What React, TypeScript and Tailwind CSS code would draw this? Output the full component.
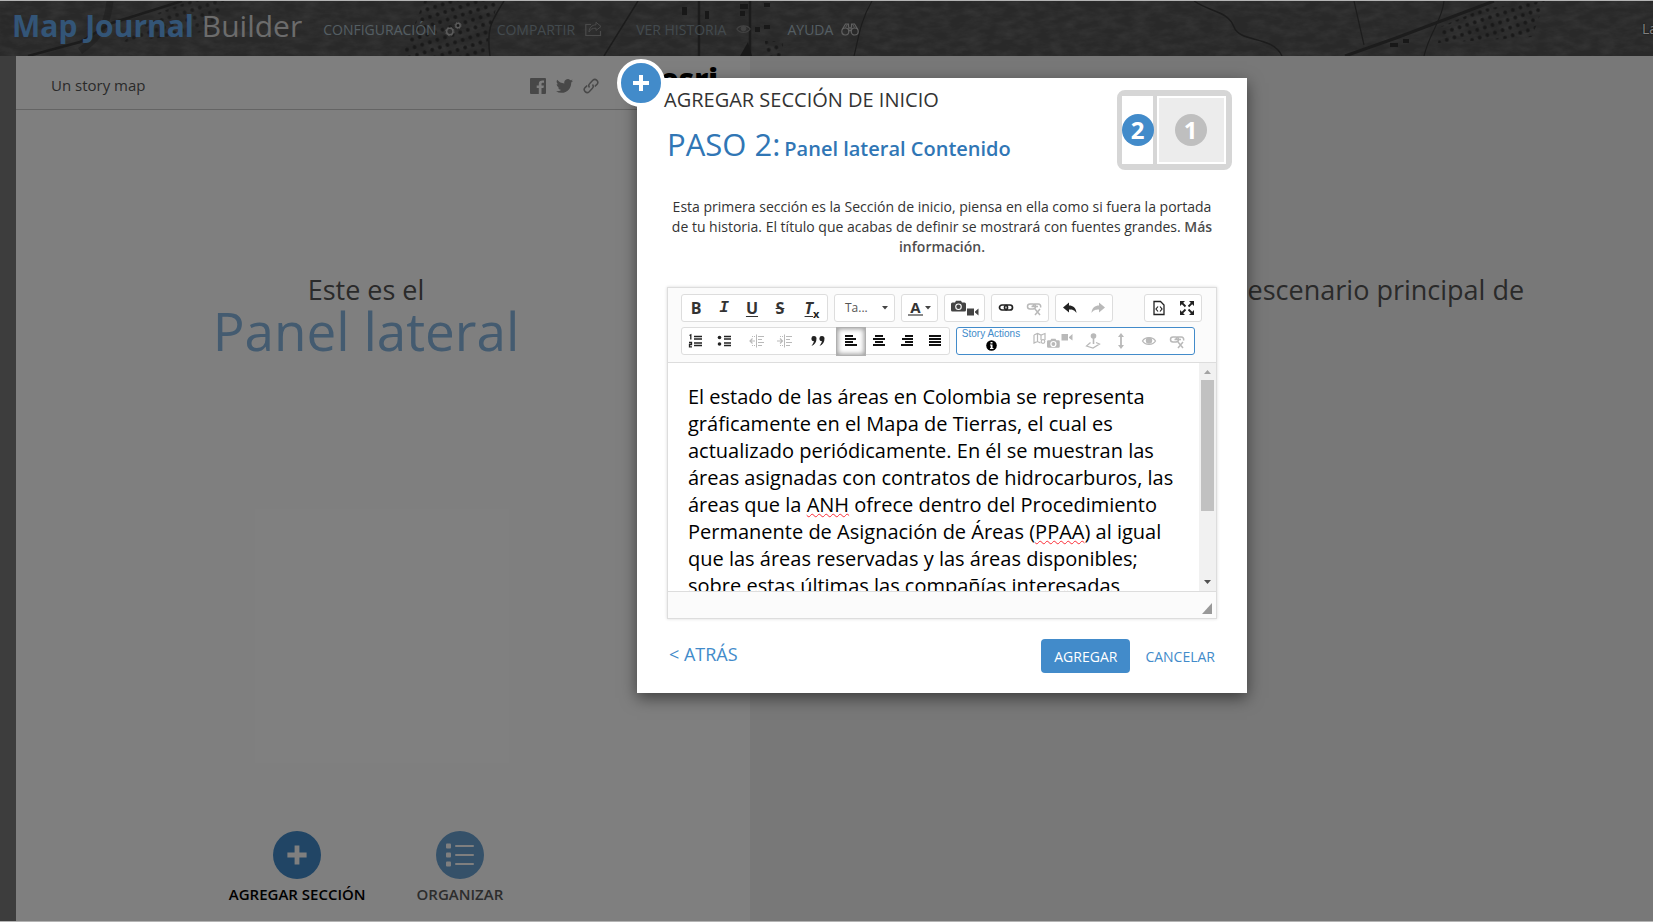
import React from "react";

type IconProps = { className?: string };

function HeaderTexture() {
  return (
    <svg
      aria-hidden="true"
      className="absolute inset-0 h-full w-full"
      viewBox="0 0 1884 55"
      preserveAspectRatio="xMinYMin slice"
    >
      <defs>
        <pattern id="dots" width="8" height="8" patternUnits="userSpaceOnUse" patternTransform="rotate(-18)">
          <circle cx="4" cy="4" r="1.900" fill="#323232" />
        </pattern>
        <filter id="grain" x="0" y="0" width="100%" height="100%">
          <feTurbulence type="fractalNoise" baseFrequency="0.06 0.14" numOctaves="4" seed="4" />
          <feColorMatrix values="0 0 0 0 0.22  0 0 0 0 0.22  0 0 0 0 0.22  0.9 0 0 0 -0.3" />
        </filter>
      </defs>
      <rect width="1884" height="55" fill="#525252" />
      <rect width="1884" height="55" filter="url(#grain)" />
      <g fill="none" stroke="#383838">
        <path d="M28 55 L80 41 L112 22 L182 0" strokeWidth="2.500" />
        <path d="M110 0 C108 18 104 34 80 50" strokeWidth="7" opacity=".5" />
        <path d="M504 0 C492 20 486 26 490 55M638 0 L604 55" strokeWidth="1.500" />
        <path d="M699 0 V55M750 0 V55" strokeWidth="2.500" />
        <path d="M872 0 C860 20 858 40 854 55" strokeWidth="1.200" />
        <path d="M1194 0 C1212 12 1228 10 1234 26 S1272 34 1282 55" strokeWidth="1.500" />
        <path d="M1345 55 L1396 37 L1494 0" strokeWidth="3" />
        <path d="M1444 0 C1442 20 1430 30 1424 55M1354 0 L1364 44" strokeWidth="1.200" />
      </g>
      <g fill="url(#dots)">
        <path d="M424 0 H498 L484 55 H402 Z" />
        <path d="M158 12 L190 0 H225 L210 30 L122 42 Z" opacity=".8" />
        <path d="M1440 26 L1482 8 L1545 0 L1532 36 L1438 42 Z" />
        <path d="M765 40 h18 v15 h-18 Z" />
      </g>
      <path
        d="M682 6h5v8h-5zM705 10h4v8h-4zM740 3h8v5h-8zM740 10h5v5h-5zM764 2h6v4h-6zM755 26h5v5h-5zM764 24h6v4h-6zM740 55l8-14 4 14zM1390 42h8v4h-8zM1403 38h6v4h-6z"
        fill="#303030"
      />
    </svg>
  );
}

function GearsIcon({ className }: IconProps) {
  return (
    <svg className={className} width="17" height="16" viewBox="0 0 17 16" fill="none" stroke="currentColor">
      <circle cx="4.800" cy="10.500" r="3.200" strokeWidth="1.500" />
      <circle cx="4.800" cy="10.500" r="4.300" strokeWidth=".8" strokeDasharray="1.6 1.8" />
      <circle cx="13" cy="4.500" r="2.200" strokeWidth="1.400" />
      <circle cx="13" cy="4.500" r="3.200" strokeWidth=".8" strokeDasharray="1.2 1.3" />
    </svg>
  );
}

function ShareIcon({ className }: IconProps) {
  return (
    <svg className={className} width="17" height="16" viewBox="0 0 17 16" fill="none" stroke="currentColor">
      <path d="M6 3.500H.8V14.500H15.500V10" strokeWidth="1.200" />
      <path d="M11 1.200 16 5.500 11 9.500V7.200C7.500 7 5.500 8.200 4 11 4.200 6.500 7 4 11 3.800Z" />
    </svg>
  );
}

function EyeIcon({ className }: IconProps) {
  return (
    <svg className={className} width="15" height="12" viewBox="0 0 15 12" fill="none" stroke="currentColor">
      <path d="M.8 6C3.500 1.800 11.500 1.800 14.200 6 11.500 10.500 3.500 10.500.8 6Z" strokeWidth="1.100" />
      <circle cx="7.500" cy="5.500" r="2.400" fill="currentColor" />
    </svg>
  );
}

function BinocularsIcon({ className }: IconProps) {
  return (
    <svg className={className} width="18" height="14" viewBox="0 0 18 14" fill="none" stroke="currentColor" strokeWidth="1.200">
      <circle cx="4.300" cy="9.500" r="3.500" />
      <circle cx="13.700" cy="9.500" r="3.500" />
      <path d="M1.200 7.500 4.500 2H7.500V5M16.800 7.500 13.500 2H10.500V5M7.800 5V9.500M10.200 5V9.500M7.500 6H10.500M7.500 8.500H10.500" />
      <path d="M4.500 5.500 6.500 2M13.500 5.500 11.500 2" strokeWidth=".9" />
    </svg>
  );
}

function FacebookIcon() {
  return (
    <svg width="16" height="16" viewBox="0 0 16 16" fill="currentColor">
      <path d="M1 0H15A1 1 0 0 1 16 1V15A1 1 0 0 1 15 16H11.500V10H13.500L13.900 7.500H11.500V6C11.500 5.200 11.900 4.800 12.700 4.800H14V2.500C11 2 8.800 3 8.800 5.700V7.500H6.700V10H8.800V16H1A1 1 0 0 1 0 15V1A1 1 0 0 1 1 0Z" />
    </svg>
  );
}

function TwitterIcon() {
  return (
    <svg width="17" height="16" viewBox="0 2 24 20" fill="currentColor">
      <path d="M24 4.600a10 10 0 0 1-2.800.8 5 5 0 0 0 2.100-2.700 10 10 0 0 1-3.100 1.200 4.900 4.900 0 0 0-8.400 4.500A14 14 0 0 1 1.700 3.200a4.900 4.900 0 0 0 1.500 6.500 4.900 4.900 0 0 1-2.200-.6v.1a4.900 4.900 0 0 0 3.900 4.800 5 5 0 0 1-2.200.1 4.900 4.900 0 0 0 4.600 3.400A9.900 9.900 0 0 1 0 19.500a14 14 0 0 0 7.500 2.200c9.100 0 14-7.500 14-14v-.6A10 10 0 0 0 24 4.600Z" />
    </svg>
  );
}

function ChainIcon() {
  return (
    <svg width="16" height="16" viewBox="0 0 16 16" fill="none" stroke="currentColor" strokeWidth="1.500">
      <path d="M6.500 9.500A3 3 0 0 1 6.800 5.500L9.800 2.300A2.900 2.900 0 0 1 13.900 6.400L11.800 8.500" />
      <path d="M9.500 6.500A3 3 0 0 1 9.200 10.500L6.200 13.700A2.900 2.900 0 0 1 2.100 9.600L4.200 7.500" />
    </svg>
  );
}

function PlusIcon({ size }: { size: number }) {
  return (
    <svg aria-hidden="true" width={size} height={size} viewBox="0 0 20 20" fill="currentColor">
      <path d="M8 2h4v6h6v4h-6v6h-4v-6h-6v-4h6z" />
    </svg>
  );
}

function ListIcon() {
  return (
    <svg aria-hidden="true" width="28" height="24" viewBox="0 0 28 24" fill="currentColor">
      <rect x="0" y="0.500" width="5" height="5" rx="1" />
      <rect x="0" y="9.500" width="5" height="5" rx="1" />
      <rect x="0" y="18.500" width="5" height="5" rx="1" />
      <rect x="9" y="2" width="19" height="2" rx="1" />
      <rect x="9" y="11" width="19" height="2" rx="1" />
      <rect x="9" y="20" width="19" height="2" rx="1" />
    </svg>
  );
}

function Svg16({ children, w = 16 }: { children: React.ReactNode; w?: number }) {
  return (
    <svg aria-hidden="true" width={w} height="16" viewBox={`0 0 ${w} 16`} fill="none" stroke="currentColor" strokeWidth="1.500">
      {children}
    </svg>
  );
}

const linkShape = (
  <g strokeWidth="1.700">
    <rect x="1.500" y="5" width="8" height="5" rx="2.500" />
    <rect x="6.500" y="5" width="8" height="5" rx="2.500" />
  </g>
);

const unlinkShape = (
  <>
    <g strokeWidth="1.500">
      <rect x="1.500" y="4" width="8" height="5" rx="2.500" />
      <path d="M5.500 6.500H12M7 6.500a2.500 2.500 0 0 1 2.500-2.500H12A2.500 2.500 0 0 1 14.500 7.500" />
    </g>
    <path d="M9 9 14 15M14 9 9 15" strokeWidth="1.500" />
  </>
);

const cameraPath =
  "M1.500 2.500H4L5 .8H10L11 2.500H13.500A1.500 1.500 0 0 1 15 4V10A1.500 1.500 0 0 1 13.500 11.500H1.500A1.500 1.500 0 0 1 0 10V4A1.500 1.500 0 0 1 1.500 2.500Z";

function Tool({
  label,
  className = "w-7",
  disabled,
  active,
  children,
}: {
  label: string;
  className?: string;
  disabled?: boolean;
  active?: boolean;
  children: React.ReactNode;
}) {
  return (
    <button
      type="button"
      aria-label={label}
      title={label}
      disabled={disabled}
      className={`flex h-[27px] items-center justify-center ${className} ${disabled ? "text-[#b9b9b9]" : "text-[#222222]"} ${
        active ? "bg-white shadow-[inset_0_0_5px_1px_rgba(0,0,0,0.4)] outline-1 outline-[#b0b0b0]" : ""
      }`}
    >
      {children}
    </button>
  );
}

function Group({ children, className = "" }: { children: React.ReactNode; className?: string }) {
  return (
    <div className={`flex h-7 items-center rounded-[3px] border border-[#dddddd] bg-white ${className}`}>{children}</div>
  );
}

function Caret() {
  return (
    <svg aria-hidden="true" width="6" height="4" viewBox="0 0 6 4" fill="#444444">
      <path d="M0 0H6L3 3.500Z" />
    </svg>
  );
}

function AlignLines({ rows }: { rows: [number, number][] }) {
  return (
    <Svg16>
      {rows.map(([x, w], i) => (
        <rect key={i} x={x} y={2 + i * 3} width={w} height="2" fill="#111111" stroke="none" />
      ))}
    </Svg16>
  );
}

function IndentIcon({ flip }: { flip?: boolean }) {
  return (
    <Svg16>
      <path d="M7.500 1.500V14.500" strokeWidth="1" />
      <path d="M9 3.500H15M9 6.500H13M9 9.500H15M9 12.500H13" strokeWidth="1" />
      <path d="M3 3.500H6M3 12.500H6" strokeWidth="1" strokeDasharray="1 1" />
      {flip ? <path d="M0 8H5M3 5.500 5.500 8 3 10.500" strokeWidth="1.200" /> : <path d="M1 8H6M3.500 5.500 1 8 3.500 10.500" strokeWidth="1.200" />}
    </Svg16>
  );
}

const letter = "text-base leading-none font-bold text-[#333333]";

function EditorToolbar() {
  return (
    <div role="toolbar" aria-label="Formato" className="flex flex-col gap-[5px] border-b border-[#dddddd] bg-[#fbfbfb] pt-[6px] pr-[14px] pb-[7px] pl-[13px]">
      <div className="flex gap-[6px]">
        <Group className="w-[147px]">
          <Tool label="Negrita"><span className={letter}>B</span></Tool>
          <Tool label="Cursiva"><span className={`${letter} font-['Liberation_Mono',monospace] italic`}>I</span></Tool>
          <Tool label="Subrayado"><span className={`${letter} underline underline-offset-2`}>U</span></Tool>
          <Tool label="Tachado"><span className={`${letter} line-through`}>S</span></Tool>
          <Tool label="Quitar formato" className="ml-1 w-7">
            <span className={`${letter} italic underline underline-offset-2`}>T</span>
            <span className="self-end pb-[3px] text-[11px] leading-none font-bold">x</span>
          </Tool>
        </Group>
        <Group className="w-[61px]">
          <button type="button" className="flex w-full items-center justify-between pr-[6px] pl-[10px] text-[12px] text-[#555555]">
            <span>Ta...</span>
            <Caret />
          </button>
        </Group>
        <Group className="w-[37px]">
          <Tool label="Color de texto" className="w-full gap-[2px]">
            <span className="border-b-2 border-[#888888] px-[2px] text-[15px] leading-[14px] font-bold text-[#333333]">A</span>
            <Caret />
          </Tool>
        </Group>
        <Group className="w-[41px]">
          <Tool label="Imagen o vídeo" className="w-full">
            <svg aria-hidden="true" width="28" height="16" viewBox="0 0 28 16" fill="#444444">
              <path d={cameraPath} />
              <circle cx="7.500" cy="6.800" r="3.300" fill="#ffffff" />
              <circle cx="7.500" cy="6.800" r="2.200" />
              <path d="M16 8.500H23V15.500H16ZM24 11.500 27.500 8.500V15.500L24 12.500Z" />
            </svg>
          </Tool>
        </Group>
        <Group className="w-[58px]">
          <Tool label="Vínculo"><Svg16>{linkShape}</Svg16></Tool>
          <Tool label="Quitar vínculo" disabled><Svg16>{unlinkShape}</Svg16></Tool>
        </Group>
        <Group className="w-[58px]">
          <Tool label="Deshacer">
            <Svg16><path d="M1 7.500 7 2.500V5.500C11 5.500 14 7.500 14.500 13 12.500 10 10.500 9.500 7 9.500V12.500Z" fill="currentColor" stroke="none" /></Svg16>
          </Tool>
          <Tool label="Rehacer" disabled>
            <Svg16><path d="M15 7.500 9 2.500V5.500C5 5.500 2 7.500 1.500 13 3.500 10 5.500 9.500 9 9.500V12.500Z" fill="currentColor" stroke="none" /></Svg16>
          </Tool>
        </Group>
        <Group className="ml-auto w-[58px]">
          <Tool label="Código fuente">
            <Svg16>
              <path d="M3 1.500H9.500L13 5V14.500H3Z" strokeWidth="1.300" />
              <path d="M7 6.500 5 9 7 11.500M9 6.500 11 9 9 11.500" strokeWidth="1.200" />
            </Svg16>
          </Tool>
          <Tool label="Maximizar">
            <Svg16>
              <path d="M1 1H6L1 6ZM15 1V6L10 1ZM1 15V10L6 15ZM15 15H10L15 10Z" fill="currentColor" stroke="none" />
              <path d="M3 3 6.500 6.500M13 3 9.500 6.500M3 13 6.500 9.500M13 13 9.500 9.500" strokeWidth="1.800" />
            </Svg16>
          </Tool>
        </Group>
      </div>
      <div className="flex gap-[6px]">
        <Group className="w-[269px]">
          <Tool label="Lista numerada">
            <Svg16>
              <path d="M6 3.500H14M6 6H14M6 10H14M6 12.500H14" strokeWidth="1.300" />
              <path d="M1.500 2.500 2.800 1.800V6.500M1 9.500H3.500V11.500H1.500V13.800H4" strokeWidth="1.300" />
            </Svg16>
          </Tool>
          <Tool label="Lista con viñetas">
            <Svg16>
              <path d="M8 3.500H15M8 6H15M8 10H15M8 12.500H15" strokeWidth="1.300" />
              <circle cx="3.500" cy="4.500" r="1.800" fill="currentColor" stroke="none" />
              <circle cx="3.500" cy="11" r="1.800" fill="currentColor" stroke="none" />
            </Svg16>
          </Tool>
          <Tool label="Reducir sangría" className="ml-[5px] w-7" disabled><IndentIcon /></Tool>
          <Tool label="Aumentar sangría" disabled><IndentIcon flip /></Tool>
          <Tool label="Cita" className="ml-[5px] w-7">
            <Svg16>
              <path d="M4 3A2.500 2.500 0 0 1 6.500 5.500C6.500 9 5 11.500 1.500 13 3 11 3.800 9.500 3.800 8A2.500 2.500 0 0 1 4 3ZM12 3A2.500 2.500 0 0 1 14.500 5.500C14.500 9 13 11.500 9.500 13 11 11 11.800 9.500 11.800 8A2.500 2.500 0 0 1 12 3Z" fill="currentColor" stroke="none" />
            </Svg16>
          </Tool>
          <Tool label="Alinear a la izquierda" className="ml-[5px] w-7" active>
            <AlignLines rows={[[2, 8], [2, 11], [2, 8], [2, 12]]} />
          </Tool>
          <Tool label="Centrar"><AlignLines rows={[[4, 8], [2, 12], [4, 8], [2, 12]]} /></Tool>
          <Tool label="Alinear a la derecha"><AlignLines rows={[[6, 8], [3, 11], [6, 8], [2, 12]]} /></Tool>
          <Tool label="Justificar"><AlignLines rows={[[2, 12], [2, 12], [2, 12], [2, 12]]} /></Tool>
        </Group>
        <div className="flex h-7 w-[239px] items-center rounded-[3px] border border-[#428bca] bg-white">
          <button type="button" className="flex w-[68px] flex-col items-center pb-[3px] font-['Liberation_Sans',sans-serif] text-[10px] leading-[12px] text-[#428bca]">
            <span>Story Actions</span>
            <svg aria-hidden="true" width="11" height="11" viewBox="0 0 11 11">
              <circle cx="5.500" cy="5.500" r="5.300" fill="#000000" />
              <path d="M4.500 2h2v1.500h-2zM4 4.500h2.500V8H7.500V9H4V8h.7V5.500H4z" fill="#ffffff" />
            </svg>
          </button>
          <Tool label="Acción multimedia" className="ml-[7px] w-[42px]" disabled>
            <svg aria-hidden="true" width="40" height="18" viewBox="0 0 40 18" fill="none" stroke="currentColor">
              <path d="M1 3 4.500 1.500 8 3 12 1.500V8M1 3V11L4.500 9.500 7.500 11M4.500 1.500V9.500M8 3V8" strokeWidth="1.200" />
              <circle cx="10" cy="9.500" r="1.800" strokeWidth="1.200" />
              <g transform="translate(14 6) scale(.85)"><path d={cameraPath} fill="currentColor" stroke="none" /></g>
              <circle cx="20.400" cy="12" r="2.500" stroke="#ffffff" strokeWidth="1.200" />
              <path d="M28.500 2H35V8.500H28.500ZM36 5 39.500 2V8.500L36 6Z" fill="currentColor" stroke="none" />
            </svg>
          </Tool>
          <Tool label="Ubicación" className="ml-[5px] w-7" disabled>
            <Svg16>
              <circle cx="8.500" cy="3" r="2.800" fill="currentColor" stroke="none" />
              <path d="M8.500 5V11" strokeWidth="1.600" />
              <path d="M5.500 9.500 1.500 13 8 15 14.500 11 11 9.500" strokeWidth="1.200" />
            </Svg16>
          </Tool>
          <Tool label="Navegación" disabled>
            <Svg16><path d="M8 3V13" strokeWidth="1.800" /><path d="M8 0 11 4H5ZM8 16 5 12H11Z" fill="currentColor" stroke="none" /></Svg16>
          </Tool>
          <Tool label="Vista" disabled>
            <Svg16>
              <path d="M1.500 8C4 3.500 12 3.500 14.500 8 12 12.500 4 12.500 1.500 8Z" strokeWidth="1.300" />
              <circle cx="8" cy="7.500" r="3.200" fill="currentColor" stroke="none" />
            </Svg16>
          </Tool>
          <Tool label="Quitar acción" disabled><Svg16>{unlinkShape}</Svg16></Tool>
        </div>
      </div>
    </div>
  );
}

function Misspelt({ children }: { children: React.ReactNode }) {
  return <span className="underline decoration-red-500 decoration-wavy decoration-1 underline-offset-1">{children}</span>;
}

function Editor() {
  return (
    <div className="border border-[#dddddd] shadow-[0_0_3px_rgba(0,0,0,0.15)]">
      <EditorToolbar />
      <div className="flex h-[228px]">
        <div
          role="textbox"
          aria-multiline="true"
          aria-label="Contenido del panel lateral"
          tabIndex={0}
          className="min-w-0 flex-1 overflow-hidden px-5 pt-5 text-[20px] leading-[27px] text-black"
        >
          <p>
            El estado de las áreas en Colombia se representa gráficamente en el Mapa de Tierras, el cual es actualizado
            periódicamente. En él se muestran las áreas asignadas con contratos de hidrocarburos, las áreas que la{" "}
            <Misspelt>ANH</Misspelt> ofrece dentro del Procedimiento Permanente de Asignación de Áreas (
            <Misspelt>PPAA</Misspelt>) al igual que las áreas reservadas y las áreas disponibles; sobre estas últimas las
            compañías interesadas
          </p>
        </div>
        <div aria-hidden="true" className="flex w-[17px] flex-col items-center justify-between bg-[#f1f1f1] text-[#a3a3a3]">
          <svg width="17" height="17" viewBox="0 0 17 17"><path d="M5 11 8.500 7 12 11Z" fill="#a3a3a3" /></svg>
          <div className="mb-auto h-[131px] w-[13px] bg-[#c1c1c1]" />
          <svg width="17" height="17" viewBox="0 0 17 17"><path d="M5 6H12L8.500 10Z" fill="#505050" /></svg>
        </div>
      </div>
      <div className="flex h-[27px] items-end justify-end border-t border-[#dddddd] bg-[#fbfbfb] pr-1 pb-1">
        <svg aria-hidden="true" width="10" height="11" viewBox="0 0 10 11"><path d="M10 0V11H0Z" fill="#999999" /></svg>
      </div>
    </div>
  );
}

function StepPicker() {
  return (
    <div className="flex h-20 w-[115px] gap-1 rounded-lg border-y-[6px] border-r-[6px] border-l-[5px] border-[#d6d6d6] bg-[#d6d6d6] text-[24px] leading-none font-bold text-white">
      <button type="button" aria-label="Paso 2" className="flex w-[31px] items-center justify-center bg-white">
        <span className="flex size-8 shrink-0 items-center justify-center rounded-full bg-[#428bca]">2</span>
      </button>
      <button type="button" aria-label="Paso 1" className="flex flex-1 items-center justify-center border-2 border-white bg-[#ececec] pr-[2px]">
        <span className="flex size-8 shrink-0 items-center justify-center rounded-full bg-[#bfbfbf]">1</span>
      </button>
    </div>
  );
}

function SectionDialog() {
  return (
    <div
      role="dialog"
      aria-labelledby="dialog-title"
      className="relative w-[610px] bg-white px-[30px] pb-5 text-[#333333] shadow-[0_5px_15px_rgba(0,0,0,0.5)]"
    >
      <span className="absolute -top-[19px] -left-5 flex size-12 items-center justify-center rounded-full border-4 border-white bg-[#428bca] text-white">
        <PlusIcon size={20} />
      </span>
      <div className="-mr-[15px] flex items-start justify-between pt-[7px]">
        <div>
          <h1 id="dialog-title" className="-ml-[3px] text-[20px] leading-[30px] font-medium">AGREGAR SECCIÓN DE INICIO</h1>
          <h2 className="mt-[9px] flex items-baseline gap-1 leading-[40px] font-medium text-[#3076b5]">
            <span className="text-[31px]">PASO 2:</span>
            <span className="text-[20px] font-semibold">Panel lateral Contenido</span>
          </h2>
        </div>
        <div className="pt-[5px]">
          <StepPicker />
        </div>
      </div>
      <p className="mt-[27px] mb-[30px] px-[2px] text-center text-[14px] leading-5">
        Esta primera sección es la Sección de inicio, piensa en ella como si fuera la portada de tu historia. El título que
        acabas de definir se mostrará con fuentes grandes.{" "}
        <a href="#mas" className="font-semibold text-[#4d4d4d]">Más información.</a>
      </p>
      <Editor />
      <div className="mt-5 flex items-center">
        <button type="button" className="pb-[4px] pl-[2px] text-[18px] text-[#428bca]">&lt; ATRÁS</button>
        <button type="button" className="ml-auto h-[34px] rounded-[4px] bg-[#428bca] px-[13px] text-[14px] text-white">AGREGAR</button>
        <button type="button" className="ml-[15px] pr-[2px] text-[14px] text-[#428bca]">CANCELAR</button>
      </div>
    </div>
  );
}

function NavItem({ label, dim, className = "", children }: { label: string; dim?: boolean; className?: string; children: React.ReactNode }) {
  return (
    <a href="#menu" className={`flex items-center text-[14px] ${dim ? "text-[#86959d]" : "text-[#a9bcc6]"} ${className}`}>
      {label}
      {children}
    </a>
  );
}

export default function App() {
  return (
    <div className="overflow-hidden bg-white pb-[2px] font-['Open_Sans','Noto_Sans',sans-serif]">
      <div className="relative flex min-h-[calc(100vh-2px)] min-w-[1884px] flex-col border-b border-[#b4b4b4]">
        <header className="relative flex h-14 shrink-0 items-center border-t border-[#b4b4b4] bg-[#505050]">
          <HeaderTexture />
          <div className="relative flex flex-1 items-center pl-3">
            <div className="pb-[5px] text-[30px] leading-[40px] text-[#d8d8d8]">
              <strong className="font-bold text-[#66aaee]">Map Journal</strong> Builder
            </div>
            <nav aria-label="Principal" className="ml-[21px] flex items-center pt-px">
              <NavItem label="CONFIGURACIÓN" className="gap-[8px]"><GearsIcon className="text-[#b8b8b8]" /></NavItem>
              <NavItem label="COMPARTIR" dim className="ml-[35px] gap-[10px]"><ShareIcon className="text-[#949494]" /></NavItem>
              <NavItem label="VER HISTORIA" dim className="ml-[34px] gap-[10px]"><EyeIcon className="text-[#848484]" /></NavItem>
              <NavItem label="AYUDA" className="ml-9 gap-2"><BinocularsIcon className="text-[#c0c0c0]" /></NavItem>
            </nav>
            <span className="ml-auto w-[242px] text-[14px] text-white [text-shadow:0_0_2px_#000000]">La</span>
          </div>
        </header>
        <main className="flex flex-1">
          <div className="w-4 bg-[#7a7a7a]" />
          <section aria-label="Panel lateral" className="flex w-[734px] flex-col bg-white">
            <div className="flex h-[54px] items-center border-b border-[#c8c8c8] pr-8 pl-[35px] text-[15px] text-[#555555]">
              <span className="pt-[6px]">Un story map</span>
              <div className="ml-auto flex items-center gap-[10px] pt-[6px] text-[#909090]">
                <FacebookIcon />
                <TwitterIcon />
                <ChainIcon />
              </div>
              <span className="ml-[61px] pb-[8px] text-[30px] leading-none font-extrabold text-black">esri</span>
            </div>
            <div className="mt-[161px] pr-[34px] text-center">
              <p className="text-[27px] leading-[38px] text-[#555555]">Este es el</p>
              <p className="text-[53px] leading-[44px] text-[#88b7e0]">Panel lateral</p>
            </div>
            <div className="mt-auto flex justify-center gap-[51px] pr-[34px] pb-4 text-[15px] leading-[22px] font-semibold">
              <button type="button" className="flex flex-col items-center gap-1 text-black">
                <span className="flex size-12 items-center justify-center rounded-full bg-[#428bca] text-white"><PlusIcon size={24} /></span>
                AGREGAR SECCIÓN
              </button>
              <button type="button" className="flex flex-col items-center gap-1 text-[#5a5a5a]">
                <span className="flex size-12 items-center justify-center rounded-full bg-[#6ba3d3] text-white"><ListIcon /></span>
                ORGANIZAR
              </button>
            </div>
          </section>
          <section aria-label="Escenario principal" className="flex-1 bg-[#f0f0f0] pt-[215px] pl-[14px] text-center text-[27px] leading-[38px] text-[#555555]">
            Este es el escenario principal de
          </section>
        </main>
        <div className="absolute inset-x-0 top-px bottom-0 flex items-start justify-center bg-black/50 pt-[77px]">
          <SectionDialog />
        </div>
      </div>
    </div>
  );
}
